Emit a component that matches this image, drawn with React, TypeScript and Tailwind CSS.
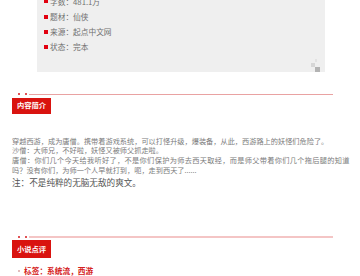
const info = [
  { label: "字数", value: "481.1万" },
  { label: "题材", value: "仙侠" },
  { label: "来源", value: "起点中文网" },
  { label: "状态", value: "完本" },
];

function SectionTitle({
  title,
  lineClass,
  boxClass,
}: {
  title: string;
  lineClass: string;
  boxClass: string;
}) {
  return (
    <div className="pl-[12px]">
      <div className="flex h-[2px] items-center">
        <span className="ml-[6px] size-[2px] rounded-full bg-[#d7191c]" />
        <span className="ml-[5px] size-[2px] rounded-full bg-[#d7191c]" />
        <span className={`ml-[2px] w-[304px] ${lineClass}`} />
      </div>
      <div
        className={`flex w-[39px] items-center justify-center bg-[#d9130f] text-[7.3px] leading-none font-bold text-white ${boxClass}`}
      >
        {title}
      </div>
    </div>
  );
}

export default function App() {
  return (
    <div className="h-[276px] w-[360px] overflow-hidden bg-white font-['Noto_Sans_CJK_SC',sans-serif]">
      <div className="relative ml-[37px] mt-[-6px] w-[288px] bg-[#efefef] pb-[17.2px]">
        {info.map((row) => (
          <div
            key={row.label}
            className="flex h-[15.2px] items-center text-[7.7px] leading-none text-[#6f6f6f]"
          >
            <span className="ml-[7px] size-[3.5px] bg-[#e1000f]" />
            <span className="ml-[2.5px]">
              {row.label}：{row.value}
            </span>
          </div>
        ))}
        <span className="absolute bottom-[10px] right-[8px] size-[2.5px] bg-[#e2e2e2]" />
        <span className="absolute bottom-[5px] right-[10px] size-[4px] bg-[#d6d6d6]" />
        <span className="absolute bottom-0 right-[5px] size-[5px] bg-[#b3b3b3]" />
      </div>

      <div className="mt-[21.3px]">
        <SectionTitle
          title="内容简介"
          lineClass="h-[1px] bg-[#e9a2a2]"
          boxClass="mt-[2.7px] h-[16px]"
        />
      </div>

      <div className="ml-[12px] mt-[22.6px] w-[337.5px] text-justify text-[7.2px] leading-[9.8px] text-[#7b7b7b]">
        <p>穿越西游，成为唐僧。携带着游戏系统，可以打怪升级，爆装备，从此，西游路上的妖怪们危险了。</p>
        <p>沙僧：大师兄，不好啦，妖怪又被师父抓走啦。</p>
        <p>
          唐僧：你们几个今天给我听好了，不是你们保护为师去西天取经，而是师父带着你们几个拖后腿的知道吗？没有你们，为师一个人早就打到，呃，走到西天了......
        </p>
        <p className="text-[8.6px] leading-[12px] text-[#555]">注：不是纯粹的无脑无敌的爽文。</p>
      </div>

      <div className="mt-[48.7px]">
        <SectionTitle
          title="小说点评"
          lineClass="h-[2px] bg-[#f4c5c5]"
          boxClass="mt-[2px] h-[17.6px]"
        />
      </div>

      <div className="mt-[7.7px] flex items-center pl-[12px] text-[7.7px] font-bold leading-[10px] text-[#d42020]">
        <span className="ml-[6px] size-[2px] rounded-full bg-[#d9a6a6]" />
        <span className="ml-[4px]">标签：系统流，西游</span>
      </div>
    </div>
  );
}
